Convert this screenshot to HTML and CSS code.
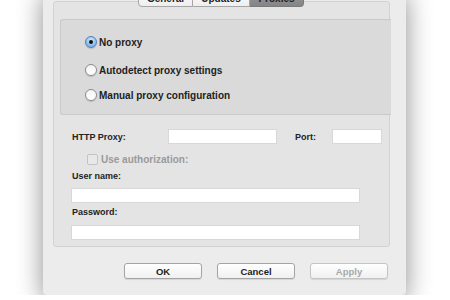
FILE: index.html
```html
<!DOCTYPE html>
<html lang="en">
<head>
    <meta charset="UTF-8">
    <title>Proxies</title>
    <link rel="stylesheet" href="styles.css">
</head>
<body>
    <div class="window">
        <div class="tabs">
            <div class="tab">General</div>
            <div class="tab">Updates</div>
            <div class="tab selected">Proxies</div>
        </div>

        <div class="panel">
            <div class="group">
                <label class="radio-row first">
                    <span class="radio checked"></span>
                    <span>No proxy</span>
                </label>
                <label class="radio-row second">
                    <span class="radio"></span>
                    <span>Autodetect proxy settings</span>
                </label>
                <label class="radio-row third">
                    <span class="radio"></span>
                    <span>Manual proxy configuration</span>
                </label>
            </div>

            <div class="http-row">
                <span class="label http-label">HTTP Proxy:</span>
                <span class="field http-field"></span>
                <span class="label port-label">Port:</span>
                <span class="field port-field"></span>
            </div>

            <div class="check-row">
                <span class="checkbox"></span>
                <span class="disabled-text">Use authorization:</span>
            </div>

            <div class="label user-label">User name:</div>
            <div class="field wide-field user-field"></div>
            <div class="label pass-label">Password:</div>
            <div class="field wide-field pass-field"></div>
        </div>

        <div class="buttons">
            <button class="btn">OK</button>
            <button class="btn">Cancel</button>
            <button class="btn disabled">Apply</button>
        </div>
    </div>
</body>
</html>
```

FILE: styles.css
```css
*{
    box-sizing: border-box;
}
body{
    margin: 0;
    background-color: #ffffff;
    font-family: "Liberation Sans", Arial, sans-serif;
    font-size: 9px;
    font-weight: bold;
    color: #222222;
    overflow: hidden;
}
.window{
    width: 363px;
    height: 306px;
    margin: -11px 0 0 43px;
    background-color: #ececec;
    border-radius: 0 0 4px 4px;
    box-shadow: 0 6px 26px rgba(0, 0, 0, 0.45);
}

/* tabs */
.tabs{
    position: relative;
    z-index: 1;
    display: flex;
    justify-content: center;
    padding-right: 7px;
    height: 18px;
}
.tab{
    height: 18px;
    line-height: 17px;
    padding: 0 4px;
    font-size: 10px;
    background: linear-gradient(#ffffff, #eeeeee);
    border: 1px solid #a6a6a6;
    border-left: none;
    color: #222;
    text-align: center;
}
.tab:first-child{
    width: 55px;
    border-left: 1px solid #a6a6a6;
    border-radius: 0 0 0 4px;
}
.tab:nth-child(2){
    width: 57px;
}
.tab.selected{
    width: 54px;
    background: linear-gradient(#9a9a9a, #858585);
    border-color: #7a7a7a;
    border-radius: 0 0 4px 0;
}

.panel{
    margin: -6px 16px 0 10px;
    height: 246px;
    padding: 17px 0 0 6px;
    background-color: #e4e4e4;
    border: 1px solid #d2d2d2;
    border-radius: 3px;
}

/* radio group */
.group{
    height: 96px;
    margin-right: -2px;
    background-color: #dadada;
    border: 1px solid #cacaca;
    border-right: none;
    border-radius: 3px 0 0 3px;
    padding-left: 24px;
    font-size: 10px;
}
.radio-row{
    display: flex;
    align-items: center;
    height: 14px;
}
.radio-row.first{
    margin-top: 15px;
}
.radio-row.second{
    margin-top: 14px;
}
.radio-row.third{
    margin-top: 11px;
}
.radio{
    width: 12px;
    height: 12px;
    margin-right: 2px;
    border-radius: 50%;
    border: 1px solid #8c8c8c;
    background: linear-gradient(#f4f4f4, #ffffff);
    box-shadow: 0 1px 1px rgba(0, 0, 0, 0.15);
    display: flex;
    align-items: center;
    justify-content: center;
}
.radio.checked{
    border-color: #5a7fb0;
    background: radial-gradient(circle at 50% 35%, #d6ecff, #7eb6ec 70%, #5c98d8);
}
.radio.checked::after{
    content: "";
    width: 4px;
    height: 4px;
    border-radius: 50%;
    background-color: #111;
}

/* form fields */
.label{
    color: #222;
}
.field{
    display: block;
    height: 15px;
    background-color: #ffffff;
    border: 1px solid #d8d8d8;
}
.http-row{
    display: flex;
    align-items: center;
    margin-top: 14px;
    padding-left: 12px;
    height: 15px;
}
.http-label{
    width: 96px;
}
.http-field{
    width: 109px;
}
.port-label{
    margin-left: 18px;
    width: 37px;
}
.port-field{
    width: 50px;
}
.check-row{
    display: flex;
    align-items: center;
    height: 14px;
    margin-top: 8px;
    padding-left: 27px;
}
.checkbox{
    width: 11px;
    height: 11px;
    margin-right: 3px;
    border: 1px solid #c4c4c4;
    border-radius: 2px;
    background-color: #e8e8e8;
}
.disabled-text{
    color: #9a9a9a;
    font-size: 10px;
}
.user-label{
    margin: 4px 0 0 12px;
    height: 12px;
    line-height: 12px;
}
.wide-field{
    width: 289px;
    margin-left: 11px;
}
.user-field{
    margin-top: 6px;
}
.pass-label{
    margin: 3px 0 0 12px;
    height: 12px;
    line-height: 12px;
}
.pass-field{
    margin-top: 7px;
}

/* buttons */
.buttons{
    display: flex;
    justify-content: flex-end;
    gap: 15px;
    margin-top: 16px;
    padding-right: 18px;
}
.btn{
    width: 78px;
    height: 16px;
    padding: 0;
    font-family: "Liberation Sans", Arial, sans-serif;
    font-size: 9.5px;
    font-weight: bold;
    color: #222;
    background: linear-gradient(#ffffff, #f0f0f0);
    border: 1px solid #a4a4a4;
    border-radius: 3px;
    box-shadow: 0 1px 1px rgba(0, 0, 0, 0.1);
}
.btn.disabled{
    color: #a8a8a8;
    border-color: #c4c4c4;
}
```
